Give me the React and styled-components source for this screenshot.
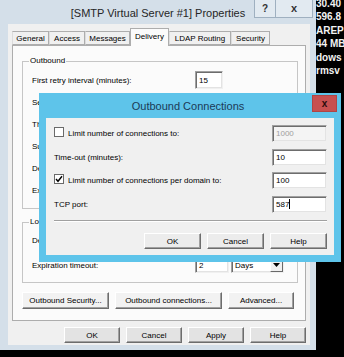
import React from 'react';
import styled, { createGlobalStyle } from 'styled-components';

const GlobalStyle = createGlobalStyle`
  html, body { margin: 0; padding: 0; background: #000; }
  body { width: 344px; height: 357px; overflow: hidden; font-family: "Liberation Sans", Arial, sans-serif; }
  * { box-sizing: border-box; }
`;

const Screen = styled.div`
  position: relative;
  width: 344px;
  height: 357px;
  background: #000;
  display: flex;
  align-items: flex-start;
  overflow: hidden;
`;

const Window = styled.div`
  flex: 0 0 316px;
  height: 350px;
  background: #d4dfe9;
  display: flex;
  flex-direction: column;
`;

const TitleBar = styled.div`
  height: 24px;
  display: grid;
  grid-template-columns: 62px 1fr 62px;
  align-items: start;
`;

const Title = styled.div`
  grid-column: 2;
  text-align: center;
  font-size: 11px;
  line-height: 13px;
  padding-top: 7px;
  color: #262626;
  white-space: nowrap;
`;

const Caption = styled.div`
  grid-column: 3;
  display: flex;
`;

const CaptionButton = styled.div`
  width: ${p => p.$w}px;
  height: 18px;
  margin-left: ${p => (p.$first ? 0 : -1)}px;
  border: 1px solid #9fb0c0;
  border-top: none;
  background: #e2eaf1;
  color: #333;
  font-size: ${p => p.$fs || 10}px;
  font-weight: bold;
  display: flex;
  align-items: center;
  justify-content: center;
  line-height: 1;
`;

const Body = styled.div`
  flex: 1;
  margin: 0 6px 5px 8px;
  background: #f0f0f0;
  padding: 4px 0 2px 4px;
  padding-right: 4px;
  display: flex;
  flex-direction: column;
`;

const TabStrip = styled.div`
  display: flex;
  align-items: flex-start;
  height: 18px;
  margin-bottom: -1px;
  position: relative;
  z-index: 1;
`;

const Tab = styled.div`
  width: ${p => p.$w}px;
  height: ${p => (p.$active ? 18 : 14)}px;
  margin-top: ${p => (p.$active ? 0 : 3)}px;
  background: ${p => (p.$active ? '#fbfbfb' : '#f0f0f0')};
  border: 1px solid #adadad;
  border-bottom: ${p => (p.$active ? 'none' : '1px solid #adadad')};
  border-left-color: ${p => (p.$active ? '#adadad' : '#dcdcdc')};
  font-size: 8px;
  color: #000;
  display: flex;
  align-items: center;
  justify-content: center;
  padding-bottom: ${p => (p.$active ? 2 : 0)}px;
  white-space: nowrap;
`;

const Panel = styled.div`
  height: 276px;
  background: #fbfbfb;
  border: 1px solid #adadad;
  padding: 15px 7px 11px 9px;
  display: flex;
  flex-direction: column;
`;

const Group = styled.div`
  position: relative;
  border: 1px solid #c6c6c6;
  margin-top: ${p => p.$mt || 0}px;
  padding: ${p => p.$pt}px 0 ${p => p.$pb}px 9px;
  display: flex;
  flex-direction: column;
  gap: ${p => p.$gap || 0}px;
`;

const Legend = styled.div`
  position: absolute;
  left: 6px;
  top: -6px;
  padding: 0 1px;
  background: #fbfbfb;
  font-size: 8px;
  line-height: 10px;
  color: #000;
`;

const Row = styled.div`
  height: 22px;
  display: flex;
  align-items: center;
  gap: 2px;
`;

const Label = styled.div`
  flex: 0 0 161px;
  font-size: 8px;
  color: #000;
  white-space: nowrap;
`;

const Field = styled.div`
  flex: 0 0 ${p => p.$w}px;
  width: ${p => p.$w}px;
  height: ${p => p.$h || 17}px;
  background: ${p => (p.$disabled ? '#f4f4f4' : '#fff')};
  border: 1px solid;
  border-color: #a0a0a0 #f0f0f0 #f0f0f0 #a0a0a0;
  box-shadow: inset 1px 1px 0 #6d6d6d, inset -1px -1px 0 #e3e3e3;
  font-size: 8px;
  color: ${p => (p.$disabled ? '#a0a0a0' : '#000')};
  padding-left: 3px;
  display: flex;
  align-items: center;
  white-space: nowrap;
  overflow: hidden;
`;

const FieldText = styled.span`
  flex: 1;
`;

const DropButton = styled.div`
  flex: 0 0 13px;
  height: 100%;
  background: #f0f0f0;
  border: 1px solid;
  border-color: #fff #696969 #696969 #fff;
  display: flex;
  align-items: center;
  justify-content: center;
`;

const Caret = styled.span`
  display: inline-block;
  width: 1px;
  height: 10px;
  background: #000;
  margin-left: 0;
`;

const ButtonRow = styled.div`
  display: flex;
  gap: ${p => p.$gap}px;
  justify-content: ${p => p.$end ? 'flex-end' : 'flex-start'};
  margin-top: ${p => p.$mt}px;
`;

const Button = styled.div`
  width: ${p => p.$w}px;
  height: ${p => p.$h || 16}px;
  background: ${p => p.$face || '#e3e3e3'};
  border: 1px solid;
  border-color: #fff #6d6d6d #6d6d6d #fff;
  box-shadow: inset -1px -1px 0 #a0a0a0;
  font-size: 8px;
  color: #000;
  display: flex;
  align-items: center;
  justify-content: center;
  white-space: nowrap;
`;

const SideText = styled.div`
  flex: 0 0 28px;
  margin-top: -3px;
  color: #f2f2f2;
  font-size: 10px;
  font-weight: bold;
  line-height: 13.4px;
  white-space: nowrap;
`;

/* Overlay dialog */
const Dialog = styled.div`
  position: absolute;
  left: 39px;
  top: 93px;
  width: 302px;
  height: 169px;
  background: #5ec4ea;
  display: flex;
  flex-direction: column;
`;

const DialogHead = styled.div`
  height: 25px;
  display: grid;
  grid-template-columns: 60px 1fr 60px;
  padding-right: 4px;
`;

const DialogTitle = styled.div`
  grid-column: 2;
  text-align: center;
  font-size: 11px;
  line-height: 13px;
  padding-top: 7px;
  color: #1c3a56;
  white-space: nowrap;
`;

const CloseButton = styled.div`
  grid-column: 3;
  justify-self: end;
  margin-top: 2px;
  width: 25px;
  height: 17px;
  background: #c75050;
  border: 1px solid #b04545;
  color: #2a0c0c;
  font-size: 10px;
  font-weight: bold;
  display: flex;
  align-items: center;
  justify-content: center;
`;

const DialogContent = styled.div`
  margin: 0 7px 7px;
  height: 137px;
  background: #f0f0f0;
  padding: 7px 7px 6px 8px;
  display: flex;
  flex-direction: column;
`;

const Rows = styled.div`
  display: flex;
  flex-direction: column;
  gap: 6.5px;
`;

const DRow = styled.div`
  height: 17px;
  display: flex;
  align-items: center;
`;

const DLabel = styled.div`
  flex: 1;
  font-size: 8px;
  color: #000;
  white-space: nowrap;
`;

const Check = styled.div`
  flex: 0 0 10px;
  height: 10px;
  margin-right: 4px;
  margin-top: -3px;
  background: #fff;
  border: 1px solid #6a6a6a;
  display: flex;
  align-items: center;
  justify-content: center;
`;

const Separator = styled.div`
  margin-top: 7.5px;
  height: 2px;
  border-top: 1px solid #a0a0a0;
  border-bottom: 1px solid #fff;
`;

const outboundRows = [
  { label: 'First retry interval (minutes):', value: '15' },
  { label: 'Second retry interval (minutes):', value: '30' },
  { label: 'Third retry interval (minutes):', value: '60' },
  { label: 'Subsequent retry interval (minutes):', value: '240' },
  { label: 'Delay notification:', value: '12', unit: 'Hours' },
  { label: 'Expiration timeout:', value: '2', unit: 'Days' },
];

const localRows = [
  { label: 'Delay notification:', value: '12', unit: 'Hours' },
  { label: 'Expiration timeout:', value: '2', unit: 'Days' },
];

const tabs = [
  { label: 'General', w: 37 },
  { label: 'Access', w: 36 },
  { label: 'Messages', w: 45 },
  { label: 'Delivery', w: 39, active: true },
  { label: 'LDAP Routing', w: 62 },
  { label: 'Security', w: 39 },
];

const Arrow = () => (
  <svg width="7" height="4" viewBox="0 0 7 4">
    <path d="M0 0 H7 L3.5 4 Z" fill="#000" />
  </svg>
);

const Tick = () => (
  <svg width="8" height="8" viewBox="0 0 8 8">
    <path d="M1 4 L3 6.3 L7 1.3" fill="none" stroke="#000" strokeWidth="1.4" />
  </svg>
);

const SettingRow = ({ label, value, unit }) => (
  <Row>
    <Label>{label}</Label>
    {unit ? (
      <>
        <Field $w={34} $h={16}>{value}</Field>
        <Field $w={53} $h={16}>
          <FieldText>{unit}</FieldText>
          <DropButton><Arrow /></DropButton>
        </Field>
      </>
    ) : (
      <Field $w={28} $h={18}>{value}</Field>
    )}
  </Row>
);

export default function App() {
  return (
    <>
      <GlobalStyle />
      <Screen>
        <Window>
          <TitleBar>
            <Title>[SMTP Virtual Server #1] Properties</Title>
            <Caption>
              <CaptionButton $w={22} $first>?</CaptionButton>
              <CaptionButton $w={38} $fs={11}>x</CaptionButton>
            </Caption>
          </TitleBar>
          <Body>
            <TabStrip>
              {tabs.map(t => (
                <Tab key={t.label} $w={t.w} $active={t.active}>{t.label}</Tab>
              ))}
            </TabStrip>
            <Panel>
              <Group $pt={7} $pb={7}>
                <Legend>Outbound</Legend>
                {outboundRows.map(r => <SettingRow key={r.label} {...r} />)}
              </Group>
              <Group $mt={13} $pt={6} $pb={6} $gap={3}>
                <Legend>Local</Legend>
                {localRows.map(r => <SettingRow key={r.label} {...r} />)}
              </Group>
              <ButtonRow $gap={6} $mt={9}>
                <Button $w={87} $h={17} $face="#f2f2f2">Outbound Security...</Button>
                <Button $w={107} $h={17} $face="#f2f2f2">Outbound connections...</Button>
                <Button $w={66} $h={17} $face="#f2f2f2">Advanced...</Button>
              </ButtonRow>
            </Panel>
            <ButtonRow $gap={6} $mt={6} $end>
              <Button $w={56}>OK</Button>
              <Button $w={56}>Cancel</Button>
              <Button $w={56}>Apply</Button>
              <Button $w={56}>Help</Button>
            </ButtonRow>
          </Body>
        </Window>
        <SideText>
          <div>30.40</div>
          <div>596.8</div>
          <div>AREP</div>
          <div>44 MB</div>
          <div>dows</div>
          <div>rmsv</div>
        </SideText>

        <Dialog>
          <DialogHead>
            <DialogTitle>Outbound Connections</DialogTitle>
            <CloseButton>x</CloseButton>
          </DialogHead>
          <DialogContent>
            <Rows>
              <DRow>
                <Check />
                <DLabel>Limit number of connections to:</DLabel>
                <Field $w={55} $disabled>1000</Field>
              </DRow>
              <DRow>
                <DLabel>Time-out (minutes):</DLabel>
                <Field $w={55}>10</Field>
              </DRow>
              <DRow>
                <Check><Tick /></Check>
                <DLabel>Limit number of connections per domain to:</DLabel>
                <Field $w={55}>100</Field>
              </DRow>
              <DRow>
                <DLabel>TCP port:</DLabel>
                <Field $w={55}>587<Caret /></Field>
              </DRow>
            </Rows>
            <Separator />
            <ButtonRow $gap={6} $mt={11} $end>
              <Button $w={57} $face="#ececec">OK</Button>
              <Button $w={57} $face="#ececec">Cancel</Button>
              <Button $w={57} $face="#ececec">Help</Button>
            </ButtonRow>
          </DialogContent>
        </Dialog>
      </Screen>
    </>
  );
}
